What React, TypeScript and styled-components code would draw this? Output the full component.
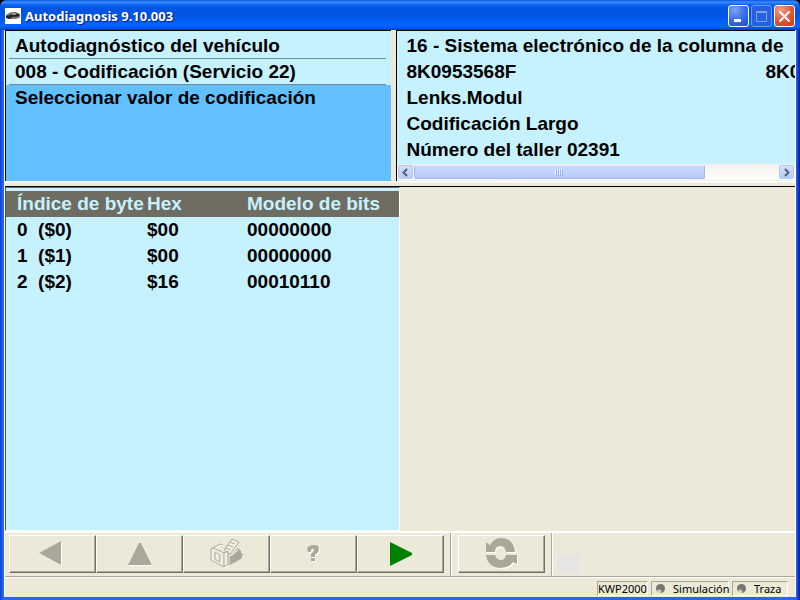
import React from "react";
import styled, { createGlobalStyle } from "styled-components";

const face = "#ece9d8";
const cyan = "#c6f1ff";
const sky = "#63c0ff";
const shade = "#aca899";

const GlobalStyle = createGlobalStyle`
  * { box-sizing: border-box; }
  body { margin: 0; background: #000; }
  button { font: inherit; margin: 0; padding: 0; }
`;

const Window = styled.main`
  display: flex;
  flex-direction: column;
  height: 100vh;
  padding: 0 4px 3px;
  overflow: hidden;
  border-radius: 7px 7px 0 0;
  background: linear-gradient(90deg, #0a3fd8 0, #2a67e8 3px, #2a67e8 calc(100% - 4px), #0019a8 100%);
`;

const TitleBar = styled.header`
  display: flex;
  flex: none;
  align-items: center;
  gap: 4px;
  height: 30px;
  margin: 0 -4px;
  padding: 2px 5px 0 5px;
  background: linear-gradient(#0a50d8 0, #3a8cff 2px, #0a62f0 5px, #0054e3 9px, #0055e5 16px, #0066ff 25px, #0060f4 27px, #003fc4 30px);
`;

const Title = styled.h1`
  flex: 1;
  margin: 0;
  color: #fff;
  font: bold 13px/16px "Noto Sans", sans-serif;
  text-shadow: 1px 1px 1px #0a1883;
`;

const Caption = styled.div`
  display: flex;
  gap: 2px;
`;

const CaptionButton = styled.button<{ $tone?: "close" | "idle" }>`
  display: grid;
  place-items: center;
  width: 21px;
  height: 22px;
  border: 1px solid ${(p) => (p.$tone === "idle" ? "#719af2" : "#fff")};
  border-radius: 3px;
  background: ${(p) =>
    p.$tone === "close"
      ? "radial-gradient(circle at 30% 20%, #f0a088, #e2593a 50%, #c93b17)"
      : p.$tone === "idle"
        ? "#2661e4"
        : "radial-gradient(circle at 30% 20%, #7fa5f5, #3a6ee8 50%, #1c4dd0)"};
`;

const Client = styled.div`
  display: flex;
  flex: 1;
  flex-direction: column;
  min-height: 0;
  background: ${face};
  border-left: 1px solid #fff;
  border-right: 1px solid #fff;
  font: bold 19px/26px "Liberation Sans", Arial, sans-serif;
  color: #000;
`;

const TopPanels = styled.div`
  display: grid;
  grid-template-columns: minmax(0, 386fr) minmax(0, 400fr);
  gap: 5px;
  flex: none;
  height: 151px;
`;

const StepPanel = styled.section`
  padding-top: 2px;
  border-top: 1px solid #000;
  border-left: 1px solid #000;
  background: linear-gradient(${cyan} 54px, ${sky} 54px);
`;

const Step = styled.p<{ $ruled?: boolean }>`
  height: 26px;
  margin: 0 5px 0 3px;
  padding-left: 6px;
  border-bottom: 1px solid ${(p) => (p.$ruled ? "#6c8c98" : "transparent")};
  white-space: nowrap;
`;

const InfoPanel = styled.section`
  display: flex;
  flex-direction: column;
  min-width: 0;
  border-top: 1px solid #000;
  border-left: 1px solid #000;
  background: ${cyan};
`;

const InfoLines = styled.div`
  flex: 1;
  padding-top: 2px;
  overflow: hidden;
`;

const InfoLine = styled.p`
  display: flex;
  gap: 249px;
  margin: 0;
  padding-left: 10px;
  white-space: nowrap;
`;

const ScrollBar = styled.div`
  display: flex;
  flex: none;
  gap: 1px;
  height: 17px;
  padding: 1px;
  background: linear-gradient(#f3f1ec, #fefefb);
  border-bottom: 1px solid #e6eef8;
`;

const ScrollArrow = styled.button`
  display: grid;
  place-items: center;
  width: 15px;
  border: 1px solid #b8c8f4;
  border-radius: 2px;
  background: linear-gradient(#d3defd, #b9cbf6);
`;

const Track = styled.div`
  display: flex;
  flex: 1;
`;

const Thumb = styled.div`
  display: flex;
  align-items: center;
  justify-content: center;
  width: 80%;
  border: 1px solid #a3b8ea;
  border-top-color: #e2eaff;
  border-radius: 2px;
  background: linear-gradient(#cad8fc, #bfcffa 70%, #b7c8f6);
`;

const Divider = styled.div`
  flex: none;
  height: 6px;
  border-top: 1px solid #fff;
  border-bottom: 1px solid #000;
  box-shadow: inset 0 1px #f8f6ee;
`;

const Workspace = styled.div`
  display: flex;
  flex: 1;
  min-height: 0;
`;

const CodingPanel = styled.section`
  width: 50%;
  padding-top: 3px;
  border: 1px solid #fff;
  border-top: 1px solid #6e6c62;
  border-left: 1px solid #55544c;
  background: ${cyan};
`;

const CodingTable = styled.table`
  width: 100%;
  table-layout: fixed;
  border-collapse: collapse;
  text-align: left;
  white-space: nowrap;

  th, td { height: 26px; padding: 0; font-weight: bold; overflow: visible; }
  th:first-child, td:first-child { padding-left: 11px; }
  th { background: #6f6c62; color: ${cyan}; }
  td { white-space: pre; }
`;

const IndexCol = styled.col`
  width: 141px;
`;

const HexCol = styled.col`
  width: 100px;
`;

const ToolBar = styled.nav`
  display: flex;
  flex: none;
  height: 46px;
  border-top: 2px solid #fff;
  border-bottom: 1px solid ${shade};
`;

const ToolGroup = styled.div`
  display: flex;
  padding: 2px 6px 3px 4px;
  border-right: 1px solid ${shade};
  box-shadow: 1px 0 #fff;

  & + & { padding-left: 7px; }
`;

const ToolButton = styled.button`
  display: grid;
  place-items: center;
  width: 87px;
  height: 38px;
  border: 1px solid;
  border-color: #fff #716f64 #716f64 #fff;
  background: ${face};
  box-shadow: inset -1px -1px ${shade};
`;

const Haze = styled.svg`
  align-self: flex-end;
  margin-left: 4px;
`;

const StatusBar = styled.footer`
  display: flex;
  flex: none;
  justify-content: flex-end;
  gap: 3px;
  height: 20px;
  padding: 3px 7px 1px;
  border-top: 1px solid #fff;
  font: 11px/15px "Noto Sans", Tahoma, sans-serif;
`;

const StatusCell = styled.div<{ $width: number }>`
  display: flex;
  align-items: center;
  gap: 8px;
  width: ${(p) => p.$width}px;
  border: 1px solid;
  border-color: ${shade} #fff #fff ${shade};
  white-space: nowrap;
`;

const Lamp = styled.i`
  flex: none;
  width: 9px;
  height: 9px;
  margin-left: 4px;
  border-radius: 50%;
  background: radial-gradient(circle at 35% 85%, #dcd9c8 1px, #77756e 3px);
`;

function CarIcon() {
  return (
    <svg width="16" height="16" viewBox="0 0 16 16" aria-hidden="true">
      <path fill="#fff" d="M0 0h16v16H0z" />
      <path fill="#777" d="M1 7l4-2.500 6-.5 4 2.500v3l-4 1.500H3L1 9z" />
      <path fill="#222" d="M1 8l4-1 3-2.500 4 .5 3 2-2 1.500-6 .5-2 2-4-1z" />
      <path fill="#aaa" d="M6 6.500l2-1.500h3l1 1-3 1z" />
    </svg>
  );
}

function Emboss({ d }: { d: string }) {
  return (
    <>
      <path d={d} fill="#fff" fillRule="evenodd" transform="translate(1 1)" />
      <path d={d} fill="#aca899" fillRule="evenodd" />
    </>
  );
}

function PrinterIcon() {
  const body = "M1 11L10 6l3 1M1 11v11l13 7 4-3M1 11l2-1 11 5 4-2M14 15v14M5 14v7l5 3v-7zM18 13v12";
  const paper = "M14 12L22 1l7 3-9 12M14 12l6 4M20 4l5 2M18 7l5 2M16 10l5 2";
  return (
    <svg width="34" height="32" viewBox="0 0 34 32" aria-hidden="true">
      <path d="M18 17l4-1 6-6 3 3v2l2 1-2 5-13 7z" fill="#aca899" />
      <path d="M14 12L22 1l7 3-9 12z" fill="#f4f2e8" />
      <g fill="none" strokeWidth="1">
        <path d={body} stroke="#fff" transform="translate(1 1)" />
        <path d={body} stroke="#aca899" />
        <path d={paper} stroke="#aca899" />
      </g>
      <path d="M19 18l3-1 6-5" fill="none" stroke="#fff" />
    </svg>
  );
}

const fields = [
  ["16 - Sistema electrónico de la columna de"],
  ["8K0953568F", "8K0953568F"],
  ["Lenks.Modul"],
  ["Codificación Largo"],
  ["Número del taller 02391"],
];

const bytes = [
  ["0  ($0)", "$00", "00000000"],
  ["1  ($1)", "$00", "00000000"],
  ["2  ($2)", "$16", "00010110"],
];

export default function App() {
  return (
    <>
      <GlobalStyle />
      <Window>
        <TitleBar>
          <CarIcon />
          <Title>Autodiagnosis 9.10.003</Title>
          <Caption>
            <CaptionButton aria-label="Minimizar">
              <svg width="15" height="15"><path d="M3 10h7v3H3z" fill="#fff" /></svg>
            </CaptionButton>
            <CaptionButton aria-label="Maximizar" $tone="idle">
              <svg width="15" height="15">
                <path d="M2.500 2.500h10v10h-10zM2 3.500h11" fill="none" stroke="#7ba2f3" />
              </svg>
            </CaptionButton>
            <CaptionButton aria-label="Cerrar" $tone="close">
              <svg width="15" height="15"><path d="M2.500 2.500l10 10M12.500 2.500l-10 10" stroke="#fff" strokeWidth="2" /></svg>
            </CaptionButton>
          </Caption>
        </TitleBar>

        <Client>
          <TopPanels>
            <StepPanel>
              <Step $ruled>Autodiagnóstico del vehículo</Step>
              <Step $ruled>008 - Codificación (Servicio 22)</Step>
              <Step>Seleccionar valor de codificación</Step>
            </StepPanel>
            <InfoPanel>
              <InfoLines>
                {fields.map((line) => (
                  <InfoLine key={line[0]}>
                    {line.map((text, i) => <span key={i}>{text}</span>)}
                  </InfoLine>
                ))}
              </InfoLines>
              <ScrollBar>
                <ScrollArrow aria-label="Desplazar a la izquierda">
                  <svg width="9" height="9"><path d="M6 1L2.500 4.500 6 8" fill="none" stroke="#4d6185" strokeWidth="2" /></svg>
                </ScrollArrow>
                <Track>
                  <Thumb>
                    <svg width="8" height="7">
                      <path d="M.5 0v6M2.500 0v6M4.500 0v6M6.500 0v6" stroke="#eef4fe" />
                      <path d="M1.500 1v6M3.500 1v6M5.500 1v6M7.500 1v6" stroke="#8cb0f8" />
                    </svg>
                  </Thumb>
                </Track>
                <ScrollArrow aria-label="Desplazar a la derecha">
                  <svg width="9" height="9"><path d="M3 1l3.500 3.500L3 8" fill="none" stroke="#4d6185" strokeWidth="2" /></svg>
                </ScrollArrow>
              </ScrollBar>
            </InfoPanel>
          </TopPanels>
          <Divider />

          <Workspace>
            <CodingPanel>
              <CodingTable>
                <colgroup>
                  <IndexCol />
                  <HexCol />
                  <col />
                </colgroup>
                <thead>
                  <tr>
                    <th scope="col">Índice de byte</th>
                    <th scope="col">Hex</th>
                    <th scope="col">Modelo de bits</th>
                  </tr>
                </thead>
                <tbody>
                  {bytes.map((row) => (
                    <tr key={row[0]}>
                      {row.map((cell, i) => <td key={i}>{cell}</td>)}
                    </tr>
                  ))}
                </tbody>
              </CodingTable>
            </CodingPanel>
          </Workspace>

          <ToolBar>
            <ToolGroup>
              <ToolButton aria-label="Atrás">
                <svg width="28" height="26"><Emboss d="M0 12L22 0v24z" /></svg>
              </ToolButton>
              <ToolButton aria-label="Arriba">
                <svg width="26" height="26"><Emboss d="M12 2h2L25 24H1z" /></svg>
              </ToolButton>
              <ToolButton aria-label="Imprimir"><PrinterIcon /></ToolButton>
              <ToolButton aria-label="Ayuda">
                <svg width="15" height="18">
                  <Emboss d="M1 3Q3 0 8 0q5 0 5 4 0 3-4 6v2H5V9q3-2 3-4Q8 3 6 4q-1 0-1 3H2zM5 13h4v3H5z" />
                </svg>
              </ToolButton>
              <ToolButton aria-label="Continuar">
                <svg width="24" height="26"><path d="M1 1l22 11v2L1 25z" fill="#008000" /></svg>
              </ToolButton>
            </ToolGroup>
            <ToolGroup>
              <ToolButton aria-label="Actualizar">
                <svg width="34" height="32">
                  <Emboss d="M1 4l4 3Q9 0 16 0q13 0 14 14H21q-1-6-5-6-6 0-6 6H1zM1 17h9q2 5 6 5 4 0 5-5h11v9l-4-2q-4 6-12 6Q3 30 1 17z" />
                </svg>
              </ToolButton>
            </ToolGroup>
            <Haze width="30" height="24" aria-hidden="true">
              <path d="M2 2h19l5 6-5 3 3 11H4L0 14z" fill="#e6e5e4" />
            </Haze>
          </ToolBar>

          <StatusBar>
            <StatusCell $width={51}>KWP2000</StatusCell>
            <StatusCell $width={78}><Lamp />Simulación</StatusCell>
            <StatusCell $width={56}><Lamp />Traza</StatusCell>
          </StatusBar>
        </Client>
      </Window>
    </>
  );
}
